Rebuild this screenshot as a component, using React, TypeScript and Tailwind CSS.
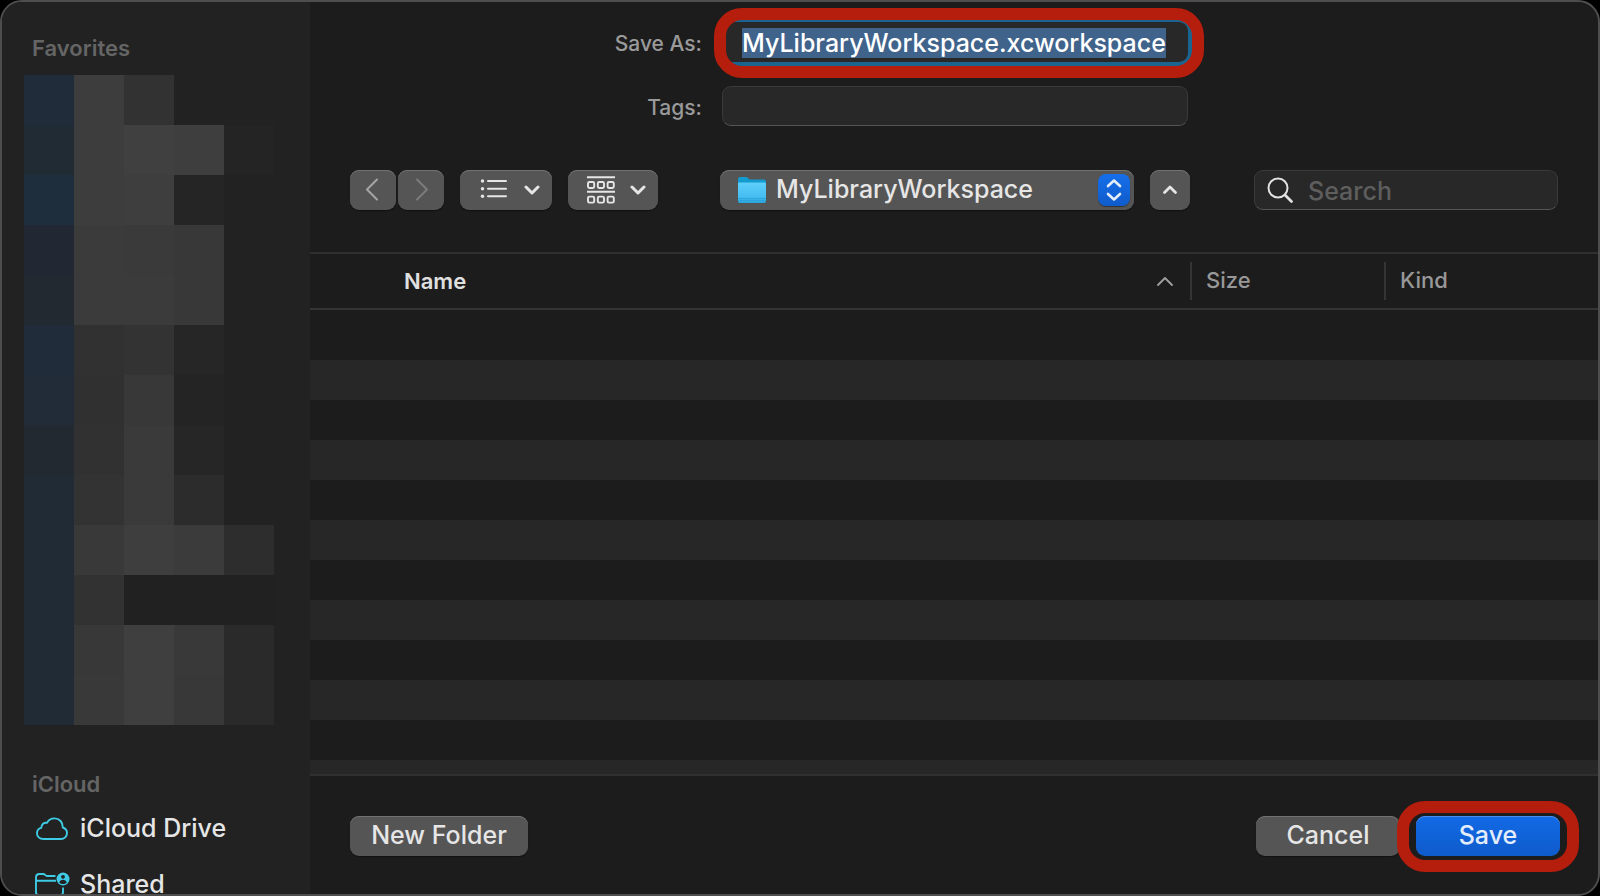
import { useEffect, useRef } from "react";

const mosaic: string[][] = [
  ["#212c3b", "#3d3d3d", "#323232", "#222222", "#222222"],
  ["#212b33", "#3d3d3d", "#404040", "#3e3e3e", "#242424"],
  ["#1f2e3d", "#3d3d3d", "#3e3e3e", "#252525", "#222222"],
  ["#222833", "#3b3b3b", "#3a3a3a", "#383838", "#222222"],
  ["#222930", "#3b3b3b", "#3b3b3b", "#383838", "#222222"],
  ["#212c3b", "#313131", "#333333", "#262626", "#222222"],
  ["#222b38", "#303030", "#383838", "#242424", "#222222"],
  ["#222930", "#313131", "#3a3a3a", "#262626", "#222222"],
  ["#212b35", "#333333", "#3a3a3a", "#2c2c2c", "#222222"],
  ["#212b36", "#393939", "#3e3e3e", "#3b3b3b", "#2d2d2d"],
  ["#212b36", "#323232", "#212121", "#212121", "#212121"],
  ["#212b36", "#383838", "#3f3f3f", "#393939", "#2a2a2a"],
  ["#212b36", "#393939", "#3f3f3f", "#383838", "#2a2a2a"],
];

const button =
  "flex h-10 items-center rounded-[9px] bg-[#555555] text-[#e6e6e6] shadow-[inset_0_1px_0_#727272,0_1px_1px_rgba(0,0,0,0.4)]";
const field =
  "h-10 w-full rounded-[9px] border border-[#3a3a3a] border-b-[#555555] bg-[#282828] outline-none";
const callout =
  "pointer-events-none absolute rounded-[28px] border-12 border-[#b51d0d]";

function Stroke({ d, width, className }: { d: string; width: number; className: string }) {
  return (
    <svg className={className} fill="none" stroke="currentColor" strokeWidth={width} strokeLinecap="round" strokeLinejoin="round" aria-hidden="true">
      <path d={d} />
    </svg>
  );
}

function ListIcon() {
  return (
    <svg className="h-6 w-7" viewBox="0 0 28 24" aria-hidden="true">
      <g fill="currentColor">
        <circle cx="2.5" cy="3" r="1.7" />
        <circle cx="2.5" cy="10.7" r="1.7" />
        <circle cx="2.5" cy="18.3" r="1.7" />
      </g>
      <path d="M8 3h18M8 10.7h18M8 18.3h18" stroke="currentColor" strokeWidth="2" strokeLinecap="round" />
    </svg>
  );
}

function GroupIcon() {
  return (
    <svg className="h-7 w-7" viewBox="0 0 28 28" fill="none" stroke="currentColor" strokeWidth="1.9" aria-hidden="true">
      <path d="M0 1.2h28M0 15.8h28" />
      {[1, 10.8, 20.6].map((x) => (
        <g key={x}>
          <rect x={x} y="6" width="6.2" height="6" rx="1.4" />
          <rect x={x} y="20.6" width="6.2" height="6" rx="1.4" />
        </g>
      ))}
    </svg>
  );
}

function FolderIcon() {
  return (
    <svg className="h-7 w-7" viewBox="0 0 28 28" aria-hidden="true">
      <defs>
        <linearGradient id="front" x1="0" y1="0" x2="0" y2="1">
          <stop offset="0" stopColor="#5fd0fb" />
          <stop offset="0.7" stopColor="#45bdf0" />
          <stop offset="1" stopColor="#2aa5dc" />
        </linearGradient>
      </defs>
      <path d="M0 3a2 2 0 0 1 2-2h6.500c1.300 0 2 2.500 3.500 2.500H26a2 2 0 0 1 2 2V14H0z" fill="#139bd0" />
      <path d="M0 7.500a1 1 0 0 1 1-1h26a1 1 0 0 1 1 1V25a2 2 0 0 1-2 2H2a2 2 0 0 1-2-2z" fill="url(#front)" />
      <path d="M0 22.500h28M0 24.500h28" stroke="#2ba3dc" strokeWidth="0.8" />
    </svg>
  );
}

function CloudIcon() {
  return (
    <svg className="h-6 w-8" viewBox="0 0 32 24" fill="none" stroke="#3ecbe5" strokeWidth="1.9" strokeLinejoin="round" aria-hidden="true">
      <path d="M7.500 22C3.500 22 1 19.600 1 16.300c0-2.700 1.700-4.800 4.300-5.400C5.100 7.600 7.700 5.300 11 5.900 12.500 3 15.200 1.400 18.500 1.400c5 0 8.500 3.900 8.300 9.100 2.600.9 4.200 3 4.200 5.600 0 3.400-2.700 5.900-6.200 5.900z" />
    </svg>
  );
}

function SharedIcon() {
  return (
    <svg className="h-7 w-[35px]" viewBox="0 0 35 28" fill="none" aria-hidden="true">
      <path d="M20.500 5H11.800C10.600 5 9.900 3 8.300 3H4.500C2.300 3 1 4.300 1 6.500V21c0 2.200 1.300 3.300 3.500 3.300h20.300c2.200 0 3.200-1.100 3.200-3.300v-4.500M1 9.800h20" stroke="#3ecbe5" strokeWidth="1.9" />
      <circle cx="28" cy="8" r="6.5" fill="#3ecbe5" />
      <circle cx="28" cy="5.8" r="1.9" fill="#222222" />
      <path d="M24.300 11.600c.5-2 1.900-2.800 3.700-2.800s3.200.8 3.700 2.800c-1 1-2.300 1.500-3.700 1.500s-2.700-.5-3.700-1.500z" fill="#222222" />
    </svg>
  );
}

function Sidebar() {
  return (
    <nav className="flex w-[308px] shrink-0 flex-col overflow-hidden bg-[#222222]">
      <h2 className="px-[30px] pt-8 text-[22px] leading-[28px] font-semibold text-[#656565]">Favorites</h2>
      <div className="mt-[13px] ml-[22px] grid w-[250px] grid-cols-5" aria-hidden="true">
        {mosaic.flat().map((color, i) => (
          <span key={i} className="h-[50px]" style={{ backgroundColor: color }} />
        ))}
      </div>
      <h2 className="mt-[45px] px-[30px] text-[22px] leading-[28px] font-semibold text-[#656565]">iCloud</h2>
      <ul className="mt-[3px] text-[25px] text-[#e6e6e6]">
        <li>
          <a href="#icloud-drive" className="flex h-14 items-center pl-[34px]">
            <span className="w-11"><CloudIcon /></span>iCloud Drive
          </a>
        </li>
        <li>
          <a href="#shared" className="flex h-14 items-center pl-[33px]">
            <span className="w-[45px]"><SharedIcon /></span>Shared
          </a>
        </li>
      </ul>
    </nav>
  );
}

function NameForm() {
  const name = useRef<HTMLInputElement>(null);
  useEffect(() => {
    name.current?.focus();
    name.current?.select();
  }, []);
  return (
    <div className="grid grid-cols-[1fr_466px_1fr] items-center gap-x-5 gap-y-6 pt-5 pl-0.5 text-[21px] font-medium text-[#9a9a9a]">
      <label htmlFor="save-as" className="pt-1 text-right">Save As:</label>
      <div className="relative">
        <input
          id="save-as"
          ref={name}
          defaultValue="MyLibraryWorkspace.xcworkspace"
          className="block h-10 w-full rounded-[9px] bg-[#282828] px-5 pt-0.5 text-[25px] leading-8 font-[450] text-white ring-4 ring-[#1a6590] outline-none selection:bg-[#3f638b] selection:text-white"
        />
        <span className={`${callout} -top-[14px] -right-4 -bottom-4 -left-2`} />
      </div>
      <span />
      <label htmlFor="tags" className="pt-1 text-right">Tags:</label>
      <input id="tags" className={`${field} px-5 text-[25px]`} />
    </div>
  );
}

function Toolbar() {
  return (
    <div className="mt-11 grid grid-cols-[1fr_470px_1fr] pr-[38px] pl-10">
      <div className="flex">
        <button aria-label="Back" className={`${button} w-[46px] justify-center`}>
          <Stroke className="h-6 w-4 text-[#a5a5a5]" width={2} d="M12 1.500 2 11.500l10 10" />
        </button>
        <button aria-label="Forward" className={`${button} ml-0.5 w-[46px] justify-center`}>
          <Stroke className="h-6 w-4 text-[#7c7c7c]" width={2} d="M4 1.500 14 11.500 4 21.500" />
        </button>
        <button aria-label="View as list" className={`${button} ml-4 w-[92px] justify-between pr-3 pl-5`}>
          <ListIcon />
          <Stroke className="h-3 w-4" width={3} d="M2 3l6 6 6-6" />
        </button>
        <button aria-label="Group items" className={`${button} ml-4 w-[90px] justify-between pr-3 pl-[19px]`}>
          <GroupIcon />
          <Stroke className="h-3 w-4" width={3} d="M2 3l6 6 6-6" />
        </button>
      </div>
      <div className="flex gap-4">
        <div className="relative flex-1">
          <select aria-label="Location" className={`${button} w-full appearance-none pl-14 text-[25px] font-[450] outline-none`}>
            <option>MyLibraryWorkspace</option>
          </select>
          <span className="pointer-events-none absolute top-1.5 left-[18px]"><FolderIcon /></span>
          <span className="pointer-events-none absolute top-1 right-1 flex size-8 items-center justify-center rounded-lg bg-linear-to-b from-[#156fea] to-[#0f5bcb] text-[#e4edfb] shadow-[0_1px_1px_rgba(0,0,0,0.4)]">
            <Stroke className="h-6 w-4" width={2.6} d="M2 8 8 2.500l6 5.500M2 16l6 5.500 6-5.500" />
          </span>
        </div>
        <button aria-label="Collapse" className={`${button} w-10 justify-center`}>
          <Stroke className="h-3 w-4" width={2.8} d="M2.500 8.500 8 3l5.500 5.500" />
        </button>
      </div>
      <div className="relative mr-0.5 w-[304px] justify-self-end">
        <input type="search" aria-label="Search" placeholder="Search" className={`${field} pt-0.5 pl-[53px] text-[25px] font-[450] placeholder:text-[#5e5e5e]`} />
        <svg className="pointer-events-none absolute top-[7px] left-[13px] size-[27px] text-[#e2e2e2]" fill="none" stroke="currentColor" strokeLinecap="round" aria-hidden="true">
          <circle cx="11" cy="11" r="9.5" strokeWidth="2" />
          <path d="M18 18l6.500 6.500" strokeWidth="2.8" />
        </svg>
      </div>
    </div>
  );
}

function FileList() {
  return (
    <div className="mt-[42px] min-h-0 flex-1 overflow-hidden border-y-2 border-[#303030]">
      <table className="w-full table-fixed border-collapse text-left text-[22px] text-[#989898]">
        <thead>
          <tr className="h-[55px] border-b-2 border-[#343434]">
            <th className="p-0 pl-[94px] font-semibold text-[#e0e0e0]">
              <div className="flex items-center justify-between pr-4">
                Name
                <Stroke className="h-3 w-[18px] text-[#a0a0a0]" width={1.8} d="M2 10l7-7 7 7" />
              </div>
            </th>
            <th className="w-[194px] p-0 font-medium">
              <div className="flex h-[38px] items-center border-l-2 border-[#343434] pb-0.5 pl-3.5">Size</div>
            </th>
            <th className="w-[214px] p-0 font-medium">
              <div className="flex h-[38px] items-center border-l-2 border-[#343434] pb-0.5 pl-3.5">Kind</div>
            </th>
          </tr>
        </thead>
        <tbody>
          <tr className="h-[11px]"><td colSpan={3} className="p-0" /></tr>
          {Array.from({ length: 12 }, (_, i) => (
            <tr key={i} className="h-10 even:bg-[#1c1c1c] odd:bg-[#272727]">
              <td /><td /><td />
            </tr>
          ))}
        </tbody>
      </table>
    </div>
  );
}

export default function App() {
  return (
    <div className="h-screen bg-black font-['Inter',sans-serif]">
      <div className="flex h-full overflow-hidden rounded-[22px] border-2 border-[#4e4e4e] bg-[#1c1c1c] font-[450]">
        <Sidebar />
        <main className="flex min-w-0 flex-1 flex-col">
          <NameForm />
          <Toolbar />
          <FileList />
          <footer className="flex items-center gap-4 pt-10 pr-[38px] pb-[38px] pl-10 text-[25px]">
            <button className={`${button} w-[178px] justify-center`}>New Folder</button>
            <button className={`${button} ml-auto w-36 justify-center`}>Cancel</button>
            <div className="relative">
              <button className="flex h-10 w-36 items-center justify-center rounded-[9px] bg-linear-to-b from-[#126ae6] to-[#0f5bcb] text-[#e4edfb] shadow-[inset_0_1px_0_#4b8fee]">Save</button>
              <span className={`${callout} -inset-x-[19px] -top-[15px] -bottom-4`} />
            </div>
          </footer>
        </main>
      </div>
    </div>
  );
}
